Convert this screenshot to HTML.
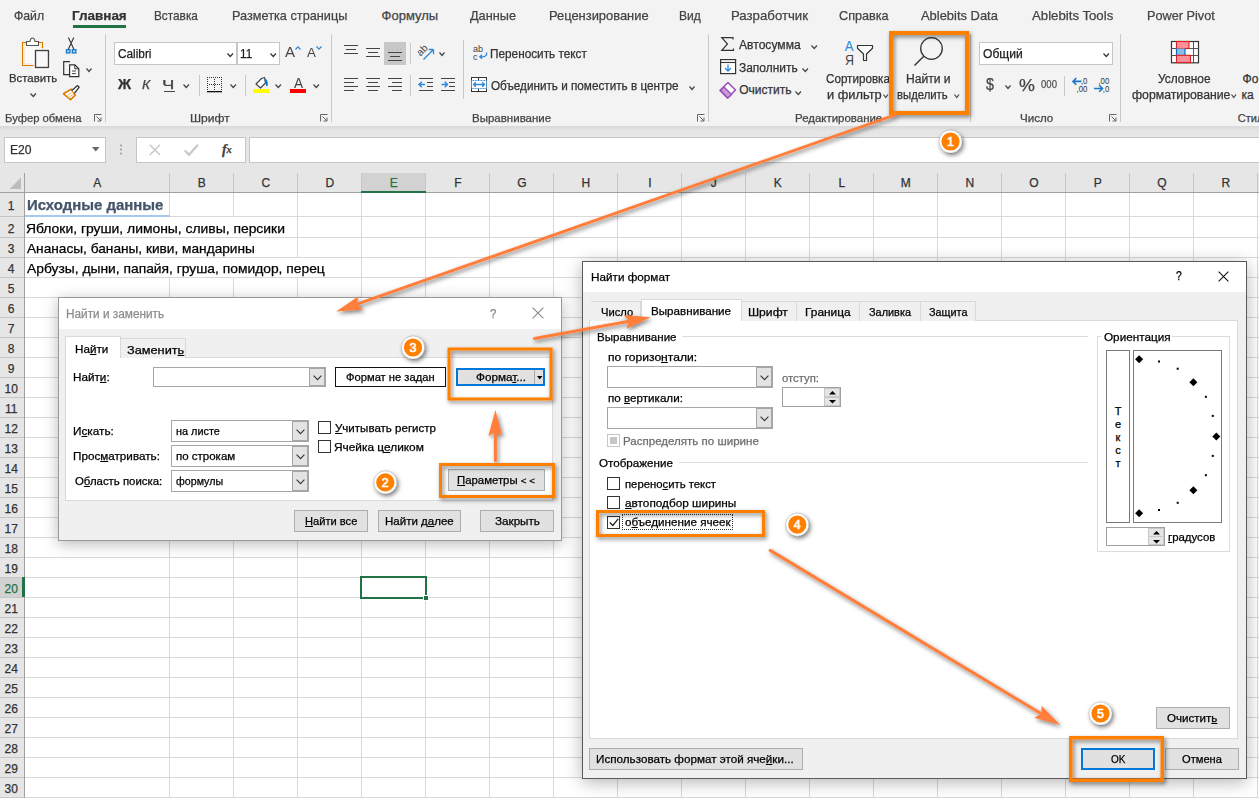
<!DOCTYPE html><html><head><meta charset="utf-8"><style>
html,body{margin:0;padding:0;}
body{width:1259px;height:798px;position:relative;overflow:hidden;background:#fff;font-family:"Liberation Sans",sans-serif;}
.t{position:absolute;white-space:nowrap;line-height:1;-webkit-text-stroke:0.25px currentColor;}
u{text-decoration:underline;text-underline-offset:1px;}
</style></head><body>
<div style="position:absolute;left:0px;top:0px;width:1259px;height:126px;background:#f3f3f3;"></div>
<div style="position:absolute;left:0px;top:126px;width:1259px;height:47px;background:#e6e6e6;"></div>
<div style="position:absolute;left:0px;top:126px;width:1259px;height:5px;background:linear-gradient(#d8d8d8,#e6e6e6);"></div>
<div class="t" style="left:13.66px;top:9.10px;font-size:13px;color:#444;transform:scaleX(0.942);transform-origin:0 0;">Файл</div>
<div class="t" style="left:153.89px;top:9.10px;font-size:13px;color:#444;transform:scaleX(0.908);transform-origin:0 0;">Вставка</div>
<div class="t" style="left:232.42px;top:9.10px;font-size:13px;color:#444;transform:scaleX(0.978);transform-origin:0 0;">Разметка страницы</div>
<div class="t" style="left:381.60px;top:9.10px;font-size:13px;color:#444;">Формулы</div>
<div class="t" style="left:469.80px;top:9.10px;font-size:13px;color:#444;transform:scaleX(0.979);transform-origin:0 0;">Данные</div>
<div class="t" style="left:548.61px;top:9.10px;font-size:13px;color:#444;transform:scaleX(0.992);transform-origin:0 0;">Рецензирование</div>
<div class="t" style="left:678.57px;top:9.10px;font-size:13px;color:#444;transform:scaleX(0.930);transform-origin:0 0;">Вид</div>
<div class="t" style="left:731.38px;top:9.10px;font-size:13px;color:#444;transform:scaleX(1.016);transform-origin:0 0;">Разработчик</div>
<div class="t" style="left:839.10px;top:9.10px;font-size:13px;color:#444;transform:scaleX(0.973);transform-origin:0 0;">Справка</div>
<div class="t" style="left:921.30px;top:9.10px;font-size:13px;color:#444;transform:scaleX(0.994);transform-origin:0 0;">Ablebits Data</div>
<div class="t" style="left:1032.30px;top:9.10px;font-size:13px;color:#444;transform:scaleX(1.016);transform-origin:0 0;">Ablebits Tools</div>
<div class="t" style="left:1146.52px;top:9.10px;font-size:13px;color:#444;transform:scaleX(0.978);transform-origin:0 0;">Power Pivot</div>
<div class="t" style="left:71.96px;top:9.10px;font-size:13px;color:#333;font-weight:700;transform:scaleX(1.035);transform-origin:0 0;">Главная</div>
<div style="position:absolute;left:73px;top:25px;width:53px;height:3px;background:#217346;"></div>
<div style="position:absolute;left:105px;top:34px;width:1px;height:88px;background:#c8c8c8;"></div>
<div style="position:absolute;left:331px;top:34px;width:1px;height:88px;background:#c8c8c8;"></div>
<div style="position:absolute;left:708px;top:34px;width:1px;height:88px;background:#c8c8c8;"></div>
<div style="position:absolute;left:970px;top:34px;width:1px;height:88px;background:#c8c8c8;"></div>
<div style="position:absolute;left:1120px;top:34px;width:1px;height:88px;background:#c8c8c8;"></div>
<svg style="position:absolute;left:18px;top:34px;overflow:visible;" width="34" height="36" viewBox="0 0 34 36"><rect x="4.5" y="8.5" width="20" height="23" fill="#fafafa" stroke="#e07b00" stroke-width="1.1"/><rect x="6" y="10" width="17" height="20" fill="none" stroke="#f7cf86" stroke-width="1" stroke-dasharray="1 1"/><path d="M8.5 11.5V7.5H12Q12.5 4 14.5 4Q16.5 4 17 7.5H20.5V11.5Z" fill="#fff" stroke="#555" stroke-width="1.1"/><rect x="15.5" y="14.5" width="17" height="21" fill="#fff"/><rect x="17.5" y="16.5" width="13" height="17" fill="#f8f8f8" stroke="#444" stroke-width="1.4"/></svg>
<div class="t" style="left:8.51px;top:73.07px;font-size:11.5px;color:#333;transform:scaleX(0.990);transform-origin:0 0;">Вставить</div>
<svg style="position:absolute;left:29.5px;top:92.5px;overflow:visible;" width="6.5" height="4" viewBox="0 0 6.5 4"><path d="M0.5 0.5L3.25 3.5L6.0 0.5" fill="none" stroke="#444" stroke-width="1.2"/></svg>
<svg style="position:absolute;left:64px;top:36px;overflow:visible;" width="14" height="18" viewBox="0 0 14 18"><path d="M4.4 1.5L10 13.4M9.8 1.5L4.2 13.4" stroke="#333" stroke-width="1.1" fill="none"/><rect x="2.4" y="13.6" width="3.6" height="3.4" fill="#9cc8ef" stroke="#1a78c8" stroke-width="1.2"/><rect x="8.3" y="13.6" width="3.6" height="3.4" fill="#9cc8ef" stroke="#1a78c8" stroke-width="1.2"/></svg>
<svg style="position:absolute;left:62px;top:60px;overflow:visible;" width="19" height="19" viewBox="0 0 19 19"><path d="M8 1.7H1.7V14.6H7" stroke="#333" stroke-width="1.2" fill="none"/><path d="M7.6 4.8H12.8L16.8 8.8V16.6H7.6Z" fill="#fff" stroke="#333" stroke-width="1.2"/><path d="M12.8 4.8V8.8H16.8" fill="none" stroke="#333" stroke-width="1"/><path d="M10 11H14M10 13.6H14" stroke="#444" stroke-width="1"/></svg>
<svg style="position:absolute;left:85.5px;top:68px;overflow:visible;" width="6" height="4" viewBox="0 0 6 4"><path d="M0.5 0.5L3.0 3.5L5.5 0.5" fill="none" stroke="#444" stroke-width="1.2"/></svg>
<svg style="position:absolute;left:62px;top:84px;overflow:visible;" width="18" height="17" viewBox="0 0 18 17"><path d="M1.5 9.8L9.2 5.2L13.2 11.2L8.6 15.6Z" fill="#fff" stroke="#e07b00" stroke-width="1.6" stroke-linejoin="round"/><path d="M4.5 11.5L10.5 8.5M6 13.8L11 10.5" stroke="#f3b36a" stroke-width="0.9"/><path d="M9.8 6.5L15.6 1.6L17.2 3.2L12.4 9.3" fill="#fff" stroke="#333" stroke-width="1.3" stroke-linejoin="round"/></svg>
<div class="t" style="left:4.68px;top:112.59px;font-size:11px;color:#444;transform:scaleX(1.023);transform-origin:0 0;">Буфер обмена</div>
<svg style="position:absolute;left:94px;top:114px;overflow:visible;" width="8" height="8" viewBox="0 0 8 8"><path d="M0.5 7.5V0.5H7.5" fill="none" stroke="#666" stroke-width="1"/><path d="M2.5 2.5L7 7M7 3.5V7H3.5" fill="none" stroke="#666" stroke-width="1"/></svg>
<div style="position:absolute;left:114px;top:42px;width:123px;height:23px;background:#fff;border:1px solid #c6c6c6;box-sizing:border-box;"></div>
<div style="position:absolute;left:237px;top:42px;width:43px;height:23px;background:#fff;border:1px solid #c6c6c6;box-sizing:border-box;"></div>
<div class="t" style="left:117.50px;top:48.14px;font-size:12px;color:#222;transform:scaleX(0.985);transform-origin:0 0;">Calibri</div>
<svg style="position:absolute;left:227px;top:53px;overflow:visible;" width="6.5" height="4" viewBox="0 0 6.5 4"><path d="M0.5 0.5L3.25 3.5L6.0 0.5" fill="none" stroke="#333" stroke-width="1.2"/></svg>
<div class="t" style="left:239.72px;top:48.14px;font-size:12px;color:#222;transform:scaleX(0.982);transform-origin:0 0;">11</div>
<svg style="position:absolute;left:270px;top:53px;overflow:visible;" width="6.5" height="4" viewBox="0 0 6.5 4"><path d="M0.5 0.5L3.25 3.5L6.0 0.5" fill="none" stroke="#333" stroke-width="1.2"/></svg>
<div class="t" style="left:284.70px;top:44.28px;font-size:15.5px;color:#444;-webkit-text-stroke:0;transform:scaleX(0.970);transform-origin:0 0;">A</div>
<svg style="position:absolute;left:295px;top:46px;overflow:visible;" width="6" height="4" viewBox="0 0 6 4"><path d="M0.5 3.5L3 0.8L5.5 3.5" fill="none" stroke="#2b88d8" stroke-width="1.2"/></svg>
<div class="t" style="left:307.40px;top:46.82px;font-size:12.5px;color:#444;-webkit-text-stroke:0;transform:scaleX(1.062);transform-origin:0 0;">A</div>
<svg style="position:absolute;left:316px;top:46px;overflow:visible;" width="6" height="4" viewBox="0 0 6 4"><path d="M0.5 0.5L3 3.2L5.5 0.5" fill="none" stroke="#2b88d8" stroke-width="1.2"/></svg>
<div class="t" style="left:118.00px;top:77.35px;font-size:14px;color:#333;font-weight:700;transform:scaleX(1.031);transform-origin:0 0;">Ж</div>
<div class="t" style="left:142.00px;top:78.20px;font-size:13px;color:#444;font-style:italic;transform:scaleX(1.062);transform-origin:0 0;">К</div>
<div class="t" style="left:162.37px;top:78.20px;font-size:13px;color:#444;transform:scaleX(1.429);transform-origin:0 0;">Ч</div>
<div style="position:absolute;left:164px;top:91px;width:11px;height:1px;background:#444;"></div>
<svg style="position:absolute;left:183px;top:83.8px;overflow:visible;" width="6.5" height="4" viewBox="0 0 6.5 4"><path d="M0.5 0.5L3.25 3.5L6.0 0.5" fill="none" stroke="#444" stroke-width="1.2"/></svg>
<div style="position:absolute;left:199px;top:75px;width:1px;height:21px;background:#c8c8c8;"></div>
<svg style="position:absolute;left:206px;top:76px;overflow:visible;" width="17" height="17" viewBox="0 0 17 17"><rect x="1" y="1" width="1" height="1" fill="#333"/><rect x="3" y="1" width="1" height="1" fill="#333"/><rect x="5" y="1" width="1" height="1" fill="#333"/><rect x="7" y="1" width="1" height="1" fill="#333"/><rect x="9" y="1" width="1" height="1" fill="#333"/><rect x="11" y="1" width="1" height="1" fill="#333"/><rect x="13" y="1" width="1" height="1" fill="#333"/><rect x="15" y="1" width="1" height="1" fill="#333"/><rect x="1" y="3" width="1" height="1" fill="#333"/><rect x="15" y="3" width="1" height="1" fill="#333"/><rect x="1" y="5" width="1" height="1" fill="#333"/><rect x="15" y="5" width="1" height="1" fill="#333"/><rect x="1" y="7" width="1" height="1" fill="#333"/><rect x="15" y="7" width="1" height="1" fill="#333"/><rect x="1" y="9" width="1" height="1" fill="#333"/><rect x="15" y="9" width="1" height="1" fill="#333"/><rect x="1" y="11" width="1" height="1" fill="#333"/><rect x="15" y="11" width="1" height="1" fill="#333"/><rect x="1" y="13" width="1" height="1" fill="#333"/><rect x="15" y="13" width="1" height="1" fill="#333"/><rect x="3" y="8" width="1" height="1" fill="#333"/><rect x="5" y="8" width="1" height="1" fill="#333"/><rect x="7" y="8" width="1" height="1" fill="#333"/><rect x="9" y="8" width="1" height="1" fill="#333"/><rect x="11" y="8" width="1" height="1" fill="#333"/><rect x="13" y="8" width="1" height="1" fill="#333"/><rect x="8" y="3" width="1" height="1" fill="#333"/><rect x="8" y="5" width="1" height="1" fill="#333"/><rect x="8" y="7" width="1" height="1" fill="#333"/><rect x="8" y="9" width="1" height="1" fill="#333"/><rect x="8" y="11" width="1" height="1" fill="#333"/><rect x="8" y="13" width="1" height="1" fill="#333"/><rect x="1" y="15" width="15" height="1.3" fill="#111"/></svg>
<svg style="position:absolute;left:229.5px;top:83.8px;overflow:visible;" width="6.5" height="4" viewBox="0 0 6.5 4"><path d="M0.5 0.5L3.25 3.5L6.0 0.5" fill="none" stroke="#444" stroke-width="1.2"/></svg>
<div style="position:absolute;left:245px;top:75px;width:1px;height:21px;background:#c8c8c8;"></div>
<svg style="position:absolute;left:252px;top:75px;overflow:visible;" width="19" height="19" viewBox="0 0 19 19"><path d="M4 9L9.5 3.5L12.5 2.5L13.5 8L8.5 13Z" fill="#fff" stroke="#444" stroke-width="1.2" stroke-linejoin="round"/><path d="M12.5 4.5Q15.5 5 14.8 11" fill="none" stroke="#1a78c8" stroke-width="1.8"/><rect x="1" y="14" width="16" height="4" fill="#ffff00"/></svg>
<svg style="position:absolute;left:275px;top:83.8px;overflow:visible;" width="6.5" height="4" viewBox="0 0 6.5 4"><path d="M0.5 0.5L3.25 3.5L6.0 0.5" fill="none" stroke="#444" stroke-width="1.2"/></svg>
<div class="t" style="left:293.90px;top:75.40px;font-size:15px;color:#444;-webkit-text-stroke:0;transform:scaleX(0.910);transform-origin:0 0;">A</div>
<div style="position:absolute;left:290px;top:89px;width:16px;height:4px;background:#ff0000;"></div>
<svg style="position:absolute;left:312.5px;top:83.8px;overflow:visible;" width="6.5" height="4" viewBox="0 0 6.5 4"><path d="M0.5 0.5L3.25 3.5L6.0 0.5" fill="none" stroke="#444" stroke-width="1.2"/></svg>
<div class="t" style="left:190.40px;top:112.59px;font-size:11px;color:#444;transform:scaleX(1.100);transform-origin:0 0;">Шрифт</div>
<svg style="position:absolute;left:320px;top:114px;overflow:visible;" width="8" height="8" viewBox="0 0 8 8"><path d="M0.5 7.5V0.5H7.5" fill="none" stroke="#666" stroke-width="1"/><path d="M2.5 2.5L7 7M7 3.5V7H3.5" fill="none" stroke="#666" stroke-width="1"/></svg>
<div style="position:absolute;left:384px;top:42px;width:22px;height:23px;background:#c8c8c8;"></div>
<div style="position:absolute;left:344px;top:45px;width:14px;height:1px;background:#444;"></div>
<div style="position:absolute;left:346px;top:49px;width:10px;height:1px;background:#444;"></div>
<div style="position:absolute;left:344px;top:53px;width:14px;height:1px;background:#444;"></div>
<div style="position:absolute;left:366px;top:48px;width:14px;height:1px;background:#444;"></div>
<div style="position:absolute;left:368px;top:52px;width:10px;height:1px;background:#444;"></div>
<div style="position:absolute;left:366px;top:56px;width:14px;height:1px;background:#444;"></div>
<div style="position:absolute;left:388px;top:52px;width:14px;height:1px;background:#444;"></div>
<div style="position:absolute;left:390px;top:56px;width:10px;height:1px;background:#444;"></div>
<div style="position:absolute;left:388px;top:60px;width:14px;height:1px;background:#444;"></div>
<div style="position:absolute;left:388px;top:49px;width:1px;height:1px;background:#b0b0b0;"></div>
<div style="position:absolute;left:392px;top:49px;width:1px;height:1px;background:#b0b0b0;"></div>
<div style="position:absolute;left:396px;top:49px;width:1px;height:1px;background:#b0b0b0;"></div>
<div style="position:absolute;left:400px;top:49px;width:1px;height:1px;background:#b0b0b0;"></div>
<div style="position:absolute;left:344px;top:78px;width:14px;height:1px;background:#444;"></div>
<div style="position:absolute;left:366px;top:78px;width:14px;height:1px;background:#444;"></div>
<div style="position:absolute;left:388px;top:78px;width:14px;height:1px;background:#444;"></div>
<div style="position:absolute;left:344px;top:86px;width:14px;height:1px;background:#444;"></div>
<div style="position:absolute;left:366px;top:86px;width:14px;height:1px;background:#444;"></div>
<div style="position:absolute;left:388px;top:86px;width:14px;height:1px;background:#444;"></div>
<div style="position:absolute;left:344px;top:82px;width:10px;height:1px;background:#444;"></div>
<div style="position:absolute;left:368px;top:82px;width:10px;height:1px;background:#444;"></div>
<div style="position:absolute;left:392px;top:82px;width:10px;height:1px;background:#444;"></div>
<div style="position:absolute;left:344px;top:90px;width:10px;height:1px;background:#444;"></div>
<div style="position:absolute;left:368px;top:90px;width:10px;height:1px;background:#444;"></div>
<div style="position:absolute;left:392px;top:90px;width:10px;height:1px;background:#444;"></div>
<div style="position:absolute;left:410px;top:43px;width:1px;height:21px;background:#c8c8c8;"></div>
<svg style="position:absolute;left:416px;top:43px;overflow:visible;" width="20" height="18" viewBox="0 0 20 18"><text x="0" y="0" font-size="10" font-family="Liberation Sans" fill="#444" transform="translate(4.5 13.5) rotate(-45)">ab</text><path d="M7.5 16.5L17.5 6.5M17.5 6.5H12.8M17.5 6.5V11.2" fill="none" stroke="#2b88d8" stroke-width="1.3"/></svg>
<svg style="position:absolute;left:438.5px;top:52px;overflow:visible;" width="6" height="4" viewBox="0 0 6 4"><path d="M0.5 0.5L3.0 3.5L5.5 0.5" fill="none" stroke="#444" stroke-width="1.2"/></svg>
<div style="position:absolute;left:410px;top:75px;width:1px;height:21px;background:#c8c8c8;"></div>
<div style="position:absolute;left:419px;top:78px;width:14px;height:1px;background:#444;"></div>
<div style="position:absolute;left:427px;top:82px;width:6px;height:1px;background:#444;"></div>
<div style="position:absolute;left:427px;top:86px;width:6px;height:1px;background:#444;"></div>
<div style="position:absolute;left:419px;top:90px;width:14px;height:1px;background:#444;"></div>
<svg style="position:absolute;left:418px;top:81px;overflow:visible;" width="8" height="7" viewBox="0 0 8 7"><path d="M7 3.5H1.2M3.8 0.8L1 3.5L3.8 6.2" fill="none" stroke="#2b88d8" stroke-width="1.4"/></svg>
<div style="position:absolute;left:441px;top:78px;width:14px;height:1px;background:#444;"></div>
<div style="position:absolute;left:449px;top:82px;width:6px;height:1px;background:#444;"></div>
<div style="position:absolute;left:449px;top:86px;width:6px;height:1px;background:#444;"></div>
<div style="position:absolute;left:441px;top:90px;width:14px;height:1px;background:#444;"></div>
<svg style="position:absolute;left:441px;top:81px;overflow:visible;" width="8" height="7" viewBox="0 0 8 7"><path d="M0.5 3.5H6.3M3.7 0.8L6.5 3.5L3.7 6.2" fill="none" stroke="#2b88d8" stroke-width="1.4"/></svg>
<div style="position:absolute;left:463px;top:40px;width:1px;height:59px;background:#c8c8c8;"></div>
<svg style="position:absolute;left:472px;top:43px;overflow:visible;" width="16" height="18" viewBox="0 0 16 18"><text x="1" y="9" font-size="9" font-family="Liberation Sans" fill="#444">ab</text><text x="1" y="16.5" font-size="9" font-family="Liberation Sans" fill="#444">c</text><path d="M14.5 9.5Q15.5 13 11 13.8H8M10 11.8L7.8 13.8L10 15.8" fill="none" stroke="#2b88d8" stroke-width="1.3"/></svg>
<div class="t" style="left:489.52px;top:48.04px;font-size:12px;color:#333;transform:scaleX(0.982);transform-origin:0 0;">Переносить текст</div>
<svg style="position:absolute;left:471px;top:77px;overflow:visible;" width="16" height="15" viewBox="0 0 16 15"><rect x="0.5" y="0.5" width="15" height="14" fill="#fff" stroke="#333" stroke-width="1"/><path d="M7.5 0.5V3.5M7.5 11.5V14.5" stroke="#333" stroke-width="1"/><rect x="0.5" y="3.5" width="15" height="8" fill="#fff" stroke="#2b88d8" stroke-width="1" stroke-dasharray="1 0.6"/><path d="M2.5 7.5H13.5M4.8 5.2L2.5 7.5L4.8 9.8M11.2 5.2L13.5 7.5L11.2 9.8" fill="none" stroke="#2b88d8" stroke-width="1.3"/></svg>
<div class="t" style="left:490.50px;top:79.84px;font-size:12px;color:#333;transform:scaleX(0.977);transform-origin:0 0;">Объединить и поместить в центре</div>
<svg style="position:absolute;left:688.5px;top:85.5px;overflow:visible;" width="6" height="4" viewBox="0 0 6 4"><path d="M0.5 0.5L3.0 3.5L5.5 0.5" fill="none" stroke="#444" stroke-width="1.2"/></svg>
<div class="t" style="left:471.55px;top:112.59px;font-size:11px;color:#444;transform:scaleX(1.046);transform-origin:0 0;">Выравнивание</div>
<svg style="position:absolute;left:697px;top:114px;overflow:visible;" width="8" height="8" viewBox="0 0 8 8"><path d="M0.5 7.5V0.5H7.5" fill="none" stroke="#666" stroke-width="1"/><path d="M2.5 2.5L7 7M7 3.5V7H3.5" fill="none" stroke="#666" stroke-width="1"/></svg>
<svg style="position:absolute;left:721px;top:37px;overflow:visible;" width="13" height="14" viewBox="0 0 13 14"><path d="M12 2.5V0.6H0.8L6.5 7L0.8 13.4H12.5V11.5" fill="none" stroke="#333" stroke-width="1.2"/></svg>
<div class="t" style="left:739.20px;top:39.44px;font-size:12px;color:#333;transform:scaleX(1.008);transform-origin:0 0;">Автосумма</div>
<svg style="position:absolute;left:811px;top:45px;overflow:visible;" width="6.5" height="4" viewBox="0 0 6.5 4"><path d="M0.5 0.5L3.25 3.5L6.0 0.5" fill="none" stroke="#444" stroke-width="1.2"/></svg>
<svg style="position:absolute;left:720px;top:59px;overflow:visible;" width="17" height="16" viewBox="0 0 17 16"><rect x="0.6" y="0.6" width="15" height="14" fill="#fff" stroke="#333" stroke-width="1.2"/><path d="M0.6 3.5H15.6" stroke="#333" stroke-width="1.1"/><path d="M8 5.5V12M5 9L8 12L11 9" fill="none" stroke="#2b88d8" stroke-width="1.3"/></svg>
<div class="t" style="left:739.20px;top:62.04px;font-size:12px;color:#333;transform:scaleX(0.995);transform-origin:0 0;">Заполнить</div>
<svg style="position:absolute;left:801.5px;top:68px;overflow:visible;" width="6.5" height="4" viewBox="0 0 6.5 4"><path d="M0.5 0.5L3.25 3.5L6.0 0.5" fill="none" stroke="#444" stroke-width="1.2"/></svg>
<svg style="position:absolute;left:719px;top:81px;overflow:visible;" width="18" height="18" viewBox="0 0 18 18"><path d="M1 9.5L9 1.5L16.5 9L8.5 17Z" fill="#fff" stroke="#9b4fb8" stroke-width="1.6" stroke-linejoin="round"/><path d="M1.5 9.5L5 6L12.5 13.5L8.8 17Z" fill="#c89ad8" stroke="#9b4fb8" stroke-width="1.4"/></svg>
<div class="t" style="left:739.20px;top:84.34px;font-size:12px;color:#333;">Очистить</div>
<svg style="position:absolute;left:794.5px;top:90.5px;overflow:visible;" width="6.5" height="4" viewBox="0 0 6.5 4"><path d="M0.5 0.5L3.25 3.5L6.0 0.5" fill="none" stroke="#444" stroke-width="1.2"/></svg>
<svg style="position:absolute;left:844px;top:39px;overflow:visible;" width="32" height="27" viewBox="0 0 32 27"><text x="0.8" y="12" font-size="15.5" font-family="Liberation Sans" fill="#2b88d8" transform="scale(0.85 1)">A</text><text x="1.2" y="26" font-size="15.5" font-family="Liberation Sans" fill="#444" transform="scale(0.8 1)">Я</text><path d="M13.5 6.5H28.5V9.3L22.5 15V21.5H19.5V15L13.5 9.3Z" fill="#fafafa" stroke="#333" stroke-width="1.2" stroke-linejoin="round"/></svg>
<div class="t" style="left:826.40px;top:72.74px;font-size:12px;color:#333;transform:scaleX(0.970);transform-origin:0 0;">Сортировка</div>
<div class="t" style="left:827.43px;top:88.74px;font-size:12px;color:#333;transform:scaleX(1.070);transform-origin:0 0;">и фильтр</div>
<svg style="position:absolute;left:883px;top:94px;overflow:visible;" width="5.5" height="4" viewBox="0 0 5.5 4"><path d="M0.5 0.5L2.75 3.5L5.0 0.5" fill="none" stroke="#444" stroke-width="1.2"/></svg>
<svg style="position:absolute;left:912px;top:36px;overflow:visible;" width="32" height="31" viewBox="0 0 32 31"><circle cx="19.5" cy="12.5" r="10.8" fill="none" stroke="#333" stroke-width="1.3"/><path d="M11.8 20.2L2.5 29.5" stroke="#333" stroke-width="1.4"/></svg>
<div class="t" style="left:906.49px;top:72.74px;font-size:12px;color:#333;transform:scaleX(1.007);transform-origin:0 0;">Найти и</div>
<div class="t" style="left:897.06px;top:88.74px;font-size:12px;color:#333;transform:scaleX(0.943);transform-origin:0 0;">выделить</div>
<svg style="position:absolute;left:953.5px;top:94px;overflow:visible;" width="5.5" height="4" viewBox="0 0 5.5 4"><path d="M0.5 0.5L2.75 3.5L5.0 0.5" fill="none" stroke="#444" stroke-width="1.2"/></svg>
<div class="t" style="left:794.56px;top:112.59px;font-size:11px;color:#444;transform:scaleX(1.041);transform-origin:0 0;">Редактирование</div>
<div style="position:absolute;left:979px;top:42px;width:134px;height:23px;background:#fff;border:1px solid #c6c6c6;box-sizing:border-box;"></div>
<div class="t" style="left:982.80px;top:47.64px;font-size:12px;color:#222;transform:scaleX(1.005);transform-origin:0 0;">Общий</div>
<svg style="position:absolute;left:1103px;top:53px;overflow:visible;" width="6.5" height="4" viewBox="0 0 6.5 4"><path d="M0.5 0.5L3.25 3.5L6.0 0.5" fill="none" stroke="#333" stroke-width="1.2"/></svg>
<div class="t" style="left:985.50px;top:77.46px;font-size:16px;color:#444;transform:scaleX(0.889);transform-origin:0 0;">$</div>
<svg style="position:absolute;left:1004.5px;top:84.5px;overflow:visible;" width="6" height="4" viewBox="0 0 6 4"><path d="M0.5 0.5L3.0 3.5L5.5 0.5" fill="none" stroke="#444" stroke-width="1.2"/></svg>
<div class="t" style="left:1019.00px;top:76.61px;font-size:17px;color:#444;transform:scaleX(1.053);transform-origin:0 0;">%</div>
<div class="t" style="left:1040.70px;top:79.53px;font-size:10px;color:#555;transform:scaleX(0.959);transform-origin:0 0;">000</div>
<div style="position:absolute;left:1064px;top:76px;width:1px;height:20px;background:#c8c8c8;"></div>
<svg style="position:absolute;left:1068px;top:72px;overflow:visible;" width="46" height="26" viewBox="0 0 46 26"><g transform="translate(19.4 0) scale(0.85 1)"><text x="0" y="11.6" text-anchor="end" font-size="9.2" font-family="Liberation Sans" fill="#333">,0</text></g><g transform="translate(19.4 0) scale(0.85 1)"><text x="0" y="19.6" text-anchor="end" font-size="9.2" font-family="Liberation Sans" fill="#333">,00</text></g><path d="M13.5 9.4H5M8.3 6.1L5 9.4L8.3 12.7" fill="none" stroke="#1a78c8" stroke-width="1.6"/><g transform="translate(41.3 0) scale(0.85 1)"><text x="0" y="11.6" text-anchor="end" font-size="9.2" font-family="Liberation Sans" fill="#333">,00</text></g><g transform="translate(41.3 0) scale(0.85 1)"><text x="0" y="19.6" text-anchor="end" font-size="9.2" font-family="Liberation Sans" fill="#333">,0</text></g><path d="M26 16.5H34.5M31.2 13.2L34.5 16.5L31.2 19.8" fill="none" stroke="#1a78c8" stroke-width="1.6"/></svg>
<div class="t" style="left:1019.95px;top:112.59px;font-size:11px;color:#444;transform:scaleX(1.053);transform-origin:0 0;">Число</div>
<svg style="position:absolute;left:1109px;top:114px;overflow:visible;" width="8" height="8" viewBox="0 0 8 8"><path d="M0.5 7.5V0.5H7.5" fill="none" stroke="#666" stroke-width="1"/><path d="M2.5 2.5L7 7M7 3.5V7H3.5" fill="none" stroke="#666" stroke-width="1"/></svg>
<svg style="position:absolute;left:1170px;top:40px;overflow:visible;" width="30" height="24" viewBox="0 0 30 24"><rect x="1.5" y="1.5" width="27" height="21.3" fill="#fff" stroke="#333" stroke-width="1.2"/><path d="M1.5 8.5H28.5M1.5 15.5H28.5M23.5 1.5V22.8" stroke="#555" stroke-width="1"/><rect x="6.5" y="1.5" width="12.5" height="7" fill="#ff9098" stroke="#e0201e" stroke-width="1.1"/><rect x="6.5" y="8.5" width="8.5" height="7" fill="#86bde9"/><path d="M6.5 8.5V15.5M15 8.5V15.5" stroke="#0a6fc2" stroke-width="1.2"/><rect x="6.5" y="15.3" width="14" height="7.3" fill="#ff9098" stroke="#e0201e" stroke-width="1.1"/></svg>
<div class="t" style="left:1158.00px;top:72.74px;font-size:12px;color:#333;transform:scaleX(0.991);transform-origin:0 0;">Условное</div>
<div class="t" style="left:1131.50px;top:88.74px;font-size:12px;color:#333;transform:scaleX(1.021);transform-origin:0 0;">форматирование</div>
<svg style="position:absolute;left:1230.5px;top:94px;overflow:visible;" width="5.5" height="4" viewBox="0 0 5.5 4"><path d="M0.5 0.5L2.75 3.5L5.0 0.5" fill="none" stroke="#444" stroke-width="1.2"/></svg>
<div class="t" style="left:1242.60px;top:72.74px;font-size:12px;color:#333;">Фо</div>
<div class="t" style="left:1241.60px;top:88.74px;font-size:12px;color:#333;">ка</div>
<div class="t" style="left:1237.80px;top:112.59px;font-size:11px;color:#444;">Стил</div>
<div style="position:absolute;left:4px;top:137px;width:102px;height:26px;background:#fff;border:1px solid #c6c6c6;box-sizing:border-box;"></div>
<div class="t" style="left:10.49px;top:144.44px;font-size:12px;color:#333;transform:scaleX(1.010);transform-origin:0 0;">E20</div>
<svg style="position:absolute;left:92px;top:147px;overflow:visible;" width="8" height="5" viewBox="0 0 8 5"><path d="M0 0H7.5L3.75 4.5Z" fill="#666"/></svg>
<svg style="position:absolute;left:119px;top:144px;overflow:visible;" width="4" height="12" viewBox="0 0 4 12"><circle cx="2" cy="1.5" r="1" fill="#999"/><circle cx="2" cy="5.5" r="1" fill="#999"/><circle cx="2" cy="9.5" r="1" fill="#999"/></svg>
<div style="position:absolute;left:136px;top:137px;width:110px;height:26px;background:#fff;border:1px solid #c6c6c6;box-sizing:border-box;"></div>
<svg style="position:absolute;left:149px;top:144px;overflow:visible;" width="12" height="12" viewBox="0 0 12 12"><path d="M0.8 0.8L11 11M11 0.8L0.8 11" stroke="#c8c8c8" stroke-width="1.5"/></svg>
<svg style="position:absolute;left:184px;top:144px;overflow:visible;" width="15" height="12" viewBox="0 0 15 12"><path d="M0.8 6.5L5 10.8L14 0.8" fill="none" stroke="#c8c8c8" stroke-width="2.2"/></svg>
<div class="t" style="left:222.00px;top:142.65px;font-size:14px;color:#444;font-style:italic;font-family:'Liberation Serif',serif;font-weight:700;">f</div>
<div class="t" style="left:226.50px;top:145.11px;font-size:10.5px;color:#444;font-style:italic;font-family:'Liberation Serif',serif;font-weight:700;">x</div>
<div style="position:absolute;left:249px;top:137px;width:1010px;height:26px;background:#fff;border:1px solid #c6c6c6;border-right:none;box-sizing:border-box;"></div>
<div style="position:absolute;left:0px;top:173px;width:1259px;height:19px;background:#e6e6e6;"></div>
<div style="position:absolute;left:0px;top:192px;width:24px;height:606px;background:#e6e6e6;"></div>
<div style="position:absolute;left:361px;top:173px;width:64px;height:19px;background:#d2d2d2;"></div>
<div style="position:absolute;left:0px;top:577px;width:24px;height:20px;background:#d2d2d2;"></div>
<div style="position:absolute;left:169px;top:173px;width:1px;height:19px;background:#c6c6c6;"></div>
<div style="position:absolute;left:233px;top:173px;width:1px;height:19px;background:#c6c6c6;"></div>
<div style="position:absolute;left:297px;top:173px;width:1px;height:19px;background:#c6c6c6;"></div>
<div style="position:absolute;left:361px;top:173px;width:1px;height:19px;background:#c6c6c6;"></div>
<div style="position:absolute;left:425px;top:173px;width:1px;height:19px;background:#c6c6c6;"></div>
<div style="position:absolute;left:489px;top:173px;width:1px;height:19px;background:#c6c6c6;"></div>
<div style="position:absolute;left:553px;top:173px;width:1px;height:19px;background:#c6c6c6;"></div>
<div style="position:absolute;left:617px;top:173px;width:1px;height:19px;background:#c6c6c6;"></div>
<div style="position:absolute;left:681px;top:173px;width:1px;height:19px;background:#c6c6c6;"></div>
<div style="position:absolute;left:745px;top:173px;width:1px;height:19px;background:#c6c6c6;"></div>
<div style="position:absolute;left:809px;top:173px;width:1px;height:19px;background:#c6c6c6;"></div>
<div style="position:absolute;left:873px;top:173px;width:1px;height:19px;background:#c6c6c6;"></div>
<div style="position:absolute;left:937px;top:173px;width:1px;height:19px;background:#c6c6c6;"></div>
<div style="position:absolute;left:1001px;top:173px;width:1px;height:19px;background:#c6c6c6;"></div>
<div style="position:absolute;left:1065px;top:173px;width:1px;height:19px;background:#c6c6c6;"></div>
<div style="position:absolute;left:1129px;top:173px;width:1px;height:19px;background:#c6c6c6;"></div>
<div style="position:absolute;left:1193px;top:173px;width:1px;height:19px;background:#c6c6c6;"></div>
<div style="position:absolute;left:1257px;top:173px;width:1px;height:19px;background:#c6c6c6;"></div>
<div style="position:absolute;left:0px;top:216px;width:24px;height:1px;background:#c6c6c6;"></div>
<div style="position:absolute;left:0px;top:237px;width:24px;height:1px;background:#c6c6c6;"></div>
<div style="position:absolute;left:0px;top:257px;width:24px;height:1px;background:#c6c6c6;"></div>
<div style="position:absolute;left:0px;top:277px;width:24px;height:1px;background:#c6c6c6;"></div>
<div style="position:absolute;left:0px;top:297px;width:24px;height:1px;background:#c6c6c6;"></div>
<div style="position:absolute;left:0px;top:317px;width:24px;height:1px;background:#c6c6c6;"></div>
<div style="position:absolute;left:0px;top:337px;width:24px;height:1px;background:#c6c6c6;"></div>
<div style="position:absolute;left:0px;top:357px;width:24px;height:1px;background:#c6c6c6;"></div>
<div style="position:absolute;left:0px;top:377px;width:24px;height:1px;background:#c6c6c6;"></div>
<div style="position:absolute;left:0px;top:397px;width:24px;height:1px;background:#c6c6c6;"></div>
<div style="position:absolute;left:0px;top:417px;width:24px;height:1px;background:#c6c6c6;"></div>
<div style="position:absolute;left:0px;top:437px;width:24px;height:1px;background:#c6c6c6;"></div>
<div style="position:absolute;left:0px;top:457px;width:24px;height:1px;background:#c6c6c6;"></div>
<div style="position:absolute;left:0px;top:477px;width:24px;height:1px;background:#c6c6c6;"></div>
<div style="position:absolute;left:0px;top:497px;width:24px;height:1px;background:#c6c6c6;"></div>
<div style="position:absolute;left:0px;top:517px;width:24px;height:1px;background:#c6c6c6;"></div>
<div style="position:absolute;left:0px;top:537px;width:24px;height:1px;background:#c6c6c6;"></div>
<div style="position:absolute;left:0px;top:557px;width:24px;height:1px;background:#c6c6c6;"></div>
<div style="position:absolute;left:0px;top:577px;width:24px;height:1px;background:#c6c6c6;"></div>
<div style="position:absolute;left:0px;top:597px;width:24px;height:1px;background:#c6c6c6;"></div>
<div style="position:absolute;left:0px;top:617px;width:24px;height:1px;background:#c6c6c6;"></div>
<div style="position:absolute;left:0px;top:637px;width:24px;height:1px;background:#c6c6c6;"></div>
<div style="position:absolute;left:0px;top:657px;width:24px;height:1px;background:#c6c6c6;"></div>
<div style="position:absolute;left:0px;top:677px;width:24px;height:1px;background:#c6c6c6;"></div>
<div style="position:absolute;left:0px;top:697px;width:24px;height:1px;background:#c6c6c6;"></div>
<div style="position:absolute;left:0px;top:717px;width:24px;height:1px;background:#c6c6c6;"></div>
<div style="position:absolute;left:0px;top:737px;width:24px;height:1px;background:#c6c6c6;"></div>
<div style="position:absolute;left:0px;top:757px;width:24px;height:1px;background:#c6c6c6;"></div>
<div style="position:absolute;left:0px;top:777px;width:24px;height:1px;background:#c6c6c6;"></div>
<div style="position:absolute;left:0px;top:797px;width:24px;height:1px;background:#c6c6c6;"></div>
<div style="position:absolute;left:0px;top:192px;width:1259px;height:1px;background:#a0a0a0;"></div>
<div style="position:absolute;left:24px;top:173px;width:1px;height:625px;background:#a0a0a0;"></div>
<div style="position:absolute;left:169px;top:193px;width:1px;height:24px;background:#d9d9d9"></div><div style="position:absolute;left:169px;top:277px;width:1px;height:521px;background:#d9d9d9"></div><div style="position:absolute;left:233px;top:193px;width:1px;height:24px;background:#d9d9d9"></div><div style="position:absolute;left:233px;top:277px;width:1px;height:521px;background:#d9d9d9"></div><div style="position:absolute;left:297px;top:193px;width:1px;height:64px;background:#d9d9d9"></div><div style="position:absolute;left:297px;top:277px;width:1px;height:521px;background:#d9d9d9"></div><div style="position:absolute;left:361px;top:193px;width:1px;height:605px;background:#d9d9d9"></div><div style="position:absolute;left:425px;top:193px;width:1px;height:605px;background:#d9d9d9"></div><div style="position:absolute;left:489px;top:193px;width:1px;height:605px;background:#d9d9d9"></div><div style="position:absolute;left:553px;top:193px;width:1px;height:605px;background:#d9d9d9"></div><div style="position:absolute;left:617px;top:193px;width:1px;height:605px;background:#d9d9d9"></div><div style="position:absolute;left:681px;top:193px;width:1px;height:605px;background:#d9d9d9"></div><div style="position:absolute;left:745px;top:193px;width:1px;height:605px;background:#d9d9d9"></div><div style="position:absolute;left:809px;top:193px;width:1px;height:605px;background:#d9d9d9"></div><div style="position:absolute;left:873px;top:193px;width:1px;height:605px;background:#d9d9d9"></div><div style="position:absolute;left:937px;top:193px;width:1px;height:605px;background:#d9d9d9"></div><div style="position:absolute;left:1001px;top:193px;width:1px;height:605px;background:#d9d9d9"></div><div style="position:absolute;left:1065px;top:193px;width:1px;height:605px;background:#d9d9d9"></div><div style="position:absolute;left:1129px;top:193px;width:1px;height:605px;background:#d9d9d9"></div><div style="position:absolute;left:1193px;top:193px;width:1px;height:605px;background:#d9d9d9"></div><div style="position:absolute;left:1257px;top:193px;width:1px;height:605px;background:#d9d9d9"></div><div style="position:absolute;left:25px;top:216px;width:1234px;height:1px;background:#d9d9d9"></div><div style="position:absolute;left:25px;top:237px;width:1234px;height:1px;background:#d9d9d9"></div><div style="position:absolute;left:25px;top:257px;width:1234px;height:1px;background:#d9d9d9"></div><div style="position:absolute;left:25px;top:277px;width:1234px;height:1px;background:#d9d9d9"></div><div style="position:absolute;left:25px;top:297px;width:1234px;height:1px;background:#d9d9d9"></div><div style="position:absolute;left:25px;top:317px;width:1234px;height:1px;background:#d9d9d9"></div><div style="position:absolute;left:25px;top:337px;width:1234px;height:1px;background:#d9d9d9"></div><div style="position:absolute;left:25px;top:357px;width:1234px;height:1px;background:#d9d9d9"></div><div style="position:absolute;left:25px;top:377px;width:1234px;height:1px;background:#d9d9d9"></div><div style="position:absolute;left:25px;top:397px;width:1234px;height:1px;background:#d9d9d9"></div><div style="position:absolute;left:25px;top:417px;width:1234px;height:1px;background:#d9d9d9"></div><div style="position:absolute;left:25px;top:437px;width:1234px;height:1px;background:#d9d9d9"></div><div style="position:absolute;left:25px;top:457px;width:1234px;height:1px;background:#d9d9d9"></div><div style="position:absolute;left:25px;top:477px;width:1234px;height:1px;background:#d9d9d9"></div><div style="position:absolute;left:25px;top:497px;width:1234px;height:1px;background:#d9d9d9"></div><div style="position:absolute;left:25px;top:517px;width:1234px;height:1px;background:#d9d9d9"></div><div style="position:absolute;left:25px;top:537px;width:1234px;height:1px;background:#d9d9d9"></div><div style="position:absolute;left:25px;top:557px;width:1234px;height:1px;background:#d9d9d9"></div><div style="position:absolute;left:25px;top:577px;width:1234px;height:1px;background:#d9d9d9"></div><div style="position:absolute;left:25px;top:597px;width:1234px;height:1px;background:#d9d9d9"></div><div style="position:absolute;left:25px;top:617px;width:1234px;height:1px;background:#d9d9d9"></div><div style="position:absolute;left:25px;top:637px;width:1234px;height:1px;background:#d9d9d9"></div><div style="position:absolute;left:25px;top:657px;width:1234px;height:1px;background:#d9d9d9"></div><div style="position:absolute;left:25px;top:677px;width:1234px;height:1px;background:#d9d9d9"></div><div style="position:absolute;left:25px;top:697px;width:1234px;height:1px;background:#d9d9d9"></div><div style="position:absolute;left:25px;top:717px;width:1234px;height:1px;background:#d9d9d9"></div><div style="position:absolute;left:25px;top:737px;width:1234px;height:1px;background:#d9d9d9"></div><div style="position:absolute;left:25px;top:757px;width:1234px;height:1px;background:#d9d9d9"></div><div style="position:absolute;left:25px;top:777px;width:1234px;height:1px;background:#d9d9d9"></div><div style="position:absolute;left:25px;top:797px;width:1234px;height:1px;background:#d9d9d9"></div>
<div style="position:absolute;left:361px;top:191px;width:65px;height:2px;background:#217346;"></div>
<div style="position:absolute;left:22px;top:577px;width:3px;height:20px;background:#217346;"></div>
<svg style="position:absolute;left:9px;top:177px;overflow:visible;" width="13" height="13" viewBox="0 0 13 13"><path d="M12 0.5V12H0.5Z" fill="#bcbcbc"/></svg>
<div class="t" style="left:93.29px;top:177.04px;font-size:12px;color:#333;">A</div>
<div class="t" style="left:197.79px;top:177.04px;font-size:12px;color:#333;">B</div>
<div class="t" style="left:261.46px;top:177.04px;font-size:12px;color:#333;">C</div>
<div class="t" style="left:325.46px;top:177.04px;font-size:12px;color:#333;">D</div>
<div class="t" style="left:389.79px;top:177.04px;font-size:12px;color:#217346;">E</div>
<div class="t" style="left:454.13px;top:177.04px;font-size:12px;color:#333;">F</div>
<div class="t" style="left:517.13px;top:177.04px;font-size:12px;color:#333;">G</div>
<div class="t" style="left:581.46px;top:177.04px;font-size:12px;color:#333;">H</div>
<div class="t" style="left:648.13px;top:177.04px;font-size:12px;color:#333;">I</div>
<div class="t" style="left:710.80px;top:177.04px;font-size:12px;color:#333;">J</div>
<div class="t" style="left:773.79px;top:177.04px;font-size:12px;color:#333;">K</div>
<div class="t" style="left:838.46px;top:177.04px;font-size:12px;color:#333;">L</div>
<div class="t" style="left:900.80px;top:177.04px;font-size:12px;color:#333;">M</div>
<div class="t" style="left:965.46px;top:177.04px;font-size:12px;color:#333;">N</div>
<div class="t" style="left:1029.13px;top:177.04px;font-size:12px;color:#333;">O</div>
<div class="t" style="left:1093.79px;top:177.04px;font-size:12px;color:#333;">P</div>
<div class="t" style="left:1157.13px;top:177.04px;font-size:12px;color:#333;">Q</div>
<div class="t" style="left:1221.46px;top:177.04px;font-size:12px;color:#333;">R</div>
<div class="t" style="left:7.86px;top:200.04px;font-size:12px;color:#333;">1</div>
<div class="t" style="left:7.86px;top:222.54px;font-size:12px;color:#333;">2</div>
<div class="t" style="left:7.86px;top:243.04px;font-size:12px;color:#333;">3</div>
<div class="t" style="left:7.86px;top:263.04px;font-size:12px;color:#333;">4</div>
<div class="t" style="left:7.86px;top:283.04px;font-size:12px;color:#333;">5</div>
<div class="t" style="left:7.86px;top:303.04px;font-size:12px;color:#333;">6</div>
<div class="t" style="left:7.86px;top:323.04px;font-size:12px;color:#333;">7</div>
<div class="t" style="left:7.86px;top:343.04px;font-size:12px;color:#333;">8</div>
<div class="t" style="left:7.86px;top:363.04px;font-size:12px;color:#333;">9</div>
<div class="t" style="left:4.52px;top:383.04px;font-size:12px;color:#333;">10</div>
<div class="t" style="left:4.97px;top:403.04px;font-size:12px;color:#333;">11</div>
<div class="t" style="left:4.52px;top:423.04px;font-size:12px;color:#333;">12</div>
<div class="t" style="left:4.52px;top:443.04px;font-size:12px;color:#333;">13</div>
<div class="t" style="left:4.52px;top:463.04px;font-size:12px;color:#333;">14</div>
<div class="t" style="left:4.52px;top:483.04px;font-size:12px;color:#333;">15</div>
<div class="t" style="left:4.52px;top:503.04px;font-size:12px;color:#333;">16</div>
<div class="t" style="left:4.52px;top:523.04px;font-size:12px;color:#333;">17</div>
<div class="t" style="left:4.52px;top:543.04px;font-size:12px;color:#333;">18</div>
<div class="t" style="left:4.52px;top:563.04px;font-size:12px;color:#333;">19</div>
<div class="t" style="left:4.52px;top:583.04px;font-size:12px;color:#217346;">20</div>
<div class="t" style="left:4.52px;top:603.04px;font-size:12px;color:#333;">21</div>
<div class="t" style="left:4.52px;top:623.04px;font-size:12px;color:#333;">22</div>
<div class="t" style="left:4.52px;top:643.04px;font-size:12px;color:#333;">23</div>
<div class="t" style="left:4.52px;top:663.04px;font-size:12px;color:#333;">24</div>
<div class="t" style="left:4.52px;top:683.04px;font-size:12px;color:#333;">25</div>
<div class="t" style="left:4.52px;top:703.04px;font-size:12px;color:#333;">26</div>
<div class="t" style="left:4.52px;top:723.04px;font-size:12px;color:#333;">27</div>
<div class="t" style="left:4.52px;top:743.04px;font-size:12px;color:#333;">28</div>
<div class="t" style="left:4.52px;top:763.04px;font-size:12px;color:#333;">29</div>
<div class="t" style="left:4.52px;top:783.04px;font-size:12px;color:#333;">30</div>
<div class="t" style="left:27.03px;top:197.95px;font-size:14px;color:#44546a;font-weight:700;transform:scaleX(1.067);transform-origin:0 0;">Исходные данные</div>
<div style="position:absolute;left:25px;top:215px;width:145px;height:2px;background:#a6c8ea;"></div>
<div class="t" style="left:26.03px;top:221.70px;font-size:13px;color:#000;transform:scaleX(1.068);transform-origin:0 0;">Яблоки, груши, лимоны, сливы, персики</div>
<div class="t" style="left:27.10px;top:241.70px;font-size:13px;color:#000;transform:scaleX(1.052);transform-origin:0 0;">Ананасы, бананы, киви, мандарины</div>
<div class="t" style="left:27.10px;top:261.70px;font-size:13px;color:#000;transform:scaleX(1.064);transform-origin:0 0;">Арбузы, дыни, папайя, груша, помидор, перец</div>
<div style="position:absolute;left:360px;top:576px;width:67px;height:23px;border:2px solid #217346;box-sizing:border-box;"></div>
<div style="position:absolute;left:423px;top:595px;width:6px;height:6px;background:#217346;border:1px solid #fff;box-sizing:border-box;"></div>
<div style="position:absolute;left:58px;top:297px;width:504px;height:244px;background:#fff;border:1px solid #999;box-sizing:border-box;box-shadow:0 3px 14px rgba(0,0,0,0.28);"></div>
<div style="position:absolute;left:59px;top:329px;width:502px;height:211px;background:#f0f0f0;"></div>
<div class="t" style="left:66.36px;top:308.42px;font-size:12.5px;color:#8c8c8c;transform:scaleX(0.944);transform-origin:0 0;">Найти и заменить</div>
<div class="t" style="left:490.00px;top:307.00px;font-size:13px;color:#888;transform:scaleX(0.886);transform-origin:0 0;">?</div>
<svg style="position:absolute;left:532px;top:307px;overflow:visible;" width="12" height="12" viewBox="0 0 12 12"><path d="M0.6 0.6L11.4 11.4M11.4 0.6L0.6 11.4" stroke="#888" stroke-width="1.1"/></svg>
<div style="position:absolute;left:65px;top:357px;width:488px;height:144px;background:#fff;border:1px solid #d9d9d9;box-sizing:border-box;"></div>
<div style="position:absolute;left:120px;top:338px;width:66px;height:20px;background:#f0f0f0;border:1px solid #d9d9d9;border-bottom:none;box-sizing:border-box;"></div>
<div style="position:absolute;left:65px;top:336px;width:56px;height:22px;background:#fff;border:1px solid #d9d9d9;border-bottom:none;box-sizing:border-box;"></div>
<div class="t" style="left:74.54px;top:343.69px;font-size:11px;color:#000;transform:scaleX(1.060);transform-origin:0 0;">На<u>й</u>ти</div>
<div class="t" style="left:126.70px;top:344.69px;font-size:11px;color:#000;transform:scaleX(1.158);transform-origin:0 0;">Заменит<u>ь</u></div>
<div class="t" style="left:73.44px;top:372.19px;font-size:11px;color:#000;transform:scaleX(1.064);transform-origin:0 0;">Найт<u>и</u>:</div>
<div style="position:absolute;left:153px;top:367px;width:173px;height:20px;background:#fff;border:1px solid #a6a6a6;box-sizing:border-box;"></div>
<div style="position:absolute;left:308.5px;top:367px;width:17.5px;height:20px;background:#e3e3e3;border:2px solid #a6a6a6;border-left-width:1px;box-sizing:border-box;"></div>
<svg style="position:absolute;left:313.25px;top:374.5px;overflow:visible;" width="9" height="6" viewBox="0 0 9 6"><path d="M0.6 0.6L4.5 4.6L8.4 0.6" fill="none" stroke="#333" stroke-width="1.1"/></svg>
<div style="position:absolute;left:335px;top:367px;width:111px;height:20px;background:#fff;border:1px solid #111;box-sizing:border-box;"></div>
<div class="t" style="left:345.50px;top:371.89px;font-size:11px;color:#000;transform:scaleX(1.017);transform-origin:0 0;">Формат не задан</div>
<div style="position:absolute;left:456px;top:368px;width:89px;height:18px;background:#e1e1e1;border:2px solid #0078d7;box-sizing:border-box;"></div>
<div style="position:absolute;left:534px;top:370px;width:1px;height:14px;background:#aaa;"></div>
<svg style="position:absolute;left:537px;top:375.5px;overflow:visible;" width="6" height="4" viewBox="0 0 6 4"><path d="M0 0H5.5L2.75 3.5Z" fill="#000"/></svg>
<div class="t" style="left:475.50px;top:372.19px;font-size:11px;color:#000;transform:scaleX(1.065);transform-origin:0 0;">Форма<u>т</u>...</div>
<div class="t" style="left:73.43px;top:426.29px;font-size:11px;color:#000;transform:scaleX(1.069);transform-origin:0 0;">И<u>с</u>кать:</div>
<div class="t" style="left:73.44px;top:451.19px;font-size:11px;color:#000;transform:scaleX(1.062);transform-origin:0 0;">Прос<u>м</u>атривать:</div>
<div class="t" style="left:74.50px;top:476.19px;font-size:11px;color:#000;transform:scaleX(1.036);transform-origin:0 0;">О<u>б</u>ласть поиска:</div>
<div style="position:absolute;left:171px;top:420px;width:138px;height:22px;background:#fff;border:1px solid #a6a6a6;box-sizing:border-box;"></div>
<div style="position:absolute;left:291.5px;top:420px;width:17.5px;height:22px;background:#e3e3e3;border:2px solid #a6a6a6;border-left-width:1px;box-sizing:border-box;"></div>
<svg style="position:absolute;left:296.25px;top:428.5px;overflow:visible;" width="9" height="6" viewBox="0 0 9 6"><path d="M0.6 0.6L4.5 4.6L8.4 0.6" fill="none" stroke="#333" stroke-width="1.1"/></svg>
<div style="position:absolute;left:171px;top:445px;width:138px;height:22px;background:#fff;border:1px solid #a6a6a6;box-sizing:border-box;"></div>
<div style="position:absolute;left:291.5px;top:445px;width:17.5px;height:22px;background:#e3e3e3;border:2px solid #a6a6a6;border-left-width:1px;box-sizing:border-box;"></div>
<svg style="position:absolute;left:296.25px;top:453.5px;overflow:visible;" width="9" height="6" viewBox="0 0 9 6"><path d="M0.6 0.6L4.5 4.6L8.4 0.6" fill="none" stroke="#333" stroke-width="1.1"/></svg>
<div style="position:absolute;left:171px;top:470px;width:138px;height:22px;background:#fff;border:1px solid #a6a6a6;box-sizing:border-box;"></div>
<div style="position:absolute;left:291.5px;top:470px;width:17.5px;height:22px;background:#e3e3e3;border:2px solid #a6a6a6;border-left-width:1px;box-sizing:border-box;"></div>
<svg style="position:absolute;left:296.25px;top:478.5px;overflow:visible;" width="9" height="6" viewBox="0 0 9 6"><path d="M0.6 0.6L4.5 4.6L8.4 0.6" fill="none" stroke="#333" stroke-width="1.1"/></svg>
<div class="t" style="left:175.50px;top:425.69px;font-size:11px;color:#000;transform:scaleX(0.989);transform-origin:0 0;">на листе</div>
<div class="t" style="left:175.50px;top:450.69px;font-size:11px;color:#000;transform:scaleX(1.045);transform-origin:0 0;">по строкам</div>
<div class="t" style="left:175.50px;top:475.69px;font-size:11px;color:#000;transform:scaleX(0.969);transform-origin:0 0;">формулы</div>
<div style="position:absolute;left:318px;top:421px;width:13px;height:13px;background:#fff;border:1px solid #333;box-sizing:border-box;"></div>
<div style="position:absolute;left:318px;top:440px;width:13px;height:13px;background:#fff;border:1px solid #333;box-sizing:border-box;"></div>
<div class="t" style="left:335.00px;top:422.69px;font-size:11px;color:#000;transform:scaleX(1.049);transform-origin:0 0;"><u>У</u>читывать регистр</div>
<div class="t" style="left:333.92px;top:442.19px;font-size:11px;color:#000;transform:scaleX(1.079);transform-origin:0 0;">Ячейка ц<u>е</u>ликом</div>
<div style="position:absolute;left:448px;top:469px;width:97px;height:22px;background:#e1e1e1;border:1px solid #adadad;box-sizing:border-box;"></div>
<div class="t" style="left:456.50px;top:475.29px;font-size:11px;color:#000;transform:scaleX(1.033);transform-origin:0 0;"><u>П</u>араметры <span style="font-size:9.5px">&lt; &lt;</span></div>
<div style="position:absolute;left:294px;top:510px;width:74px;height:22px;background:#e1e1e1;border:1px solid #adadad;box-sizing:border-box;"></div>
<div class="t" style="left:304.50px;top:516.19px;font-size:11px;color:#000;transform:scaleX(1.010);transform-origin:0 0;"><u>Н</u>айти все</div>
<div style="position:absolute;left:378px;top:510px;width:83px;height:22px;background:#e1e1e1;border:1px solid #adadad;box-sizing:border-box;"></div>
<div class="t" style="left:384.95px;top:516.19px;font-size:11px;color:#000;transform:scaleX(1.047);transform-origin:0 0;">Найти д<u>а</u>лее</div>
<div style="position:absolute;left:480px;top:510px;width:74px;height:22px;background:#e1e1e1;border:1px solid #adadad;box-sizing:border-box;"></div>
<div class="t" style="left:494.50px;top:516.19px;font-size:11px;color:#000;transform:scaleX(1.060);transform-origin:0 0;">Закрыть</div>
<div style="position:absolute;left:582px;top:261px;width:665px;height:518px;background:#fff;border:1px solid #5a5a5a;box-sizing:border-box;box-shadow:0 3px 16px rgba(0,0,0,0.3);"></div>
<div style="position:absolute;left:583px;top:292px;width:663px;height:486px;background:#f0f0f0;"></div>
<div class="t" style="left:590.78px;top:271.67px;font-size:11.5px;color:#000;transform:scaleX(1.019);transform-origin:0 0;">Найти формат</div>
<div class="t" style="left:1175.50px;top:270.02px;font-size:12.5px;color:#000;transform:scaleX(0.829);transform-origin:0 0;">?</div>
<svg style="position:absolute;left:1217.5px;top:270.5px;overflow:visible;" width="11" height="11" viewBox="0 0 11 11"><path d="M0.6 0.6L10.4 10.4M10.4 0.6L0.6 10.4" stroke="#111" stroke-width="1.1"/></svg>
<div style="position:absolute;left:589px;top:320px;width:649px;height:419px;background:#fff;border:1px solid #d9d9d9;box-sizing:border-box;"></div>
<div style="position:absolute;left:591px;top:301px;width:50px;height:20px;background:#f0f0f0;border:1px solid #d9d9d9;border-bottom:none;border-left:none;box-sizing:border-box;"></div>
<div class="t" style="left:600.68px;top:306.69px;font-size:11px;color:#000;transform:scaleX(1.017);transform-origin:0 0;">Число</div>
<div style="position:absolute;left:741px;top:301px;width:56px;height:20px;background:#f0f0f0;border:1px solid #d9d9d9;border-bottom:none;box-sizing:border-box;"></div>
<div class="t" style="left:748.20px;top:306.69px;font-size:11px;color:#000;transform:scaleX(1.103);transform-origin:0 0;">Шрифт</div>
<div style="position:absolute;left:796px;top:301px;width:64px;height:20px;background:#f0f0f0;border:1px solid #d9d9d9;border-bottom:none;box-sizing:border-box;"></div>
<div class="t" style="left:805.02px;top:306.69px;font-size:11px;color:#000;transform:scaleX(1.083);transform-origin:0 0;">Граница</div>
<div style="position:absolute;left:859px;top:301px;width:62px;height:20px;background:#f0f0f0;border:1px solid #d9d9d9;border-bottom:none;box-sizing:border-box;"></div>
<div class="t" style="left:869.00px;top:306.69px;font-size:11px;color:#000;transform:scaleX(0.991);transform-origin:0 0;">Заливка</div>
<div style="position:absolute;left:920px;top:301px;width:56px;height:20px;background:#f0f0f0;border:1px solid #d9d9d9;border-bottom:none;box-sizing:border-box;"></div>
<div class="t" style="left:929.00px;top:306.69px;font-size:11px;color:#000;transform:scaleX(0.985);transform-origin:0 0;">Защита</div>
<div style="position:absolute;left:641px;top:299px;width:101px;height:22px;background:#fff;border:1px solid #d9d9d9;border-bottom:none;box-sizing:border-box;"></div>
<div class="t" style="left:651.14px;top:305.99px;font-size:11px;color:#000;transform:scaleX(1.057);transform-origin:0 0;">Выравнивание</div>
<div class="t" style="left:597.25px;top:332.19px;font-size:11px;color:#000;transform:scaleX(1.050);transform-origin:0 0;">Выравнивание</div>
<div style="position:absolute;left:682px;top:336px;width:406px;height:1px;background:#dcdcdc;"></div>
<div class="t" style="left:607.50px;top:351.99px;font-size:11px;color:#000;transform:scaleX(1.099);transform-origin:0 0;">по горизо<u>н</u>тали:</div>
<div style="position:absolute;left:607px;top:366px;width:166px;height:22px;background:#fff;border:1px solid #a6a6a6;box-sizing:border-box;"></div>
<div style="position:absolute;left:755.5px;top:366px;width:17.5px;height:22px;background:#e3e3e3;border:2px solid #a6a6a6;border-left-width:1px;box-sizing:border-box;"></div>
<svg style="position:absolute;left:760.25px;top:374.5px;overflow:visible;" width="9" height="6" viewBox="0 0 9 6"><path d="M0.6 0.6L4.5 4.6L8.4 0.6" fill="none" stroke="#333" stroke-width="1.1"/></svg>
<div class="t" style="left:782.30px;top:372.69px;font-size:11px;color:#6d6d6d;transform:scaleX(1.029);transform-origin:0 0;">отступ:</div>
<div style="position:absolute;left:782px;top:387px;width:59px;height:20px;background:#fff;border:1px solid #a0a0a0;box-sizing:border-box;"></div>
<div style="position:absolute;left:824px;top:388px;width:16px;height:9px;background:#e5e5e5;border:1px solid #c8c8c8;box-sizing:border-box;"></div>
<div style="position:absolute;left:824px;top:397px;width:16px;height:9px;background:#e5e5e5;border:1px solid #c8c8c8;box-sizing:border-box;"></div>
<svg style="position:absolute;left:828.5px;top:390.5px;overflow:visible;" width="7" height="4" viewBox="0 0 7 4"><path d="M0 3.5H7L3.5 0Z" fill="#000"/></svg>
<svg style="position:absolute;left:828.5px;top:400px;overflow:visible;" width="7" height="4" viewBox="0 0 7 4"><path d="M0 0H7L3.5 3.5Z" fill="#000"/></svg>
<div class="t" style="left:607.50px;top:392.89px;font-size:11px;color:#000;transform:scaleX(1.057);transform-origin:0 0;">по <u>в</u>ертикали:</div>
<div style="position:absolute;left:607px;top:407px;width:166px;height:22px;background:#fff;border:1px solid #a6a6a6;box-sizing:border-box;"></div>
<div style="position:absolute;left:755.5px;top:407px;width:17.5px;height:22px;background:#e3e3e3;border:2px solid #a6a6a6;border-left-width:1px;box-sizing:border-box;"></div>
<svg style="position:absolute;left:760.25px;top:415.5px;overflow:visible;" width="9" height="6" viewBox="0 0 9 6"><path d="M0.6 0.6L4.5 4.6L8.4 0.6" fill="none" stroke="#333" stroke-width="1.1"/></svg>
<div style="position:absolute;left:607px;top:434px;width:13px;height:13px;background:#fff;border:1px solid #c6c6c6;box-sizing:border-box;"></div>
<div style="position:absolute;left:610px;top:437px;width:7px;height:7px;background:#c6c6c6;"></div>
<div class="t" style="left:622.95px;top:435.69px;font-size:11px;color:#6d6d6d;transform:scaleX(1.049);transform-origin:0 0;">Распределять по ширине</div>
<div class="t" style="left:599.00px;top:458.19px;font-size:11px;color:#000;transform:scaleX(1.057);transform-origin:0 0;">Отображение</div>
<div style="position:absolute;left:679px;top:462px;width:409px;height:1px;background:#dcdcdc;"></div>
<div style="position:absolute;left:607px;top:477px;width:13px;height:13px;background:#fff;border:1px solid #333;box-sizing:border-box;"></div>
<div style="position:absolute;left:607px;top:496px;width:13px;height:13px;background:#fff;border:1px solid #333;box-sizing:border-box;"></div>
<div style="position:absolute;left:607px;top:516px;width:13px;height:13px;background:#fff;border:1px solid #333;box-sizing:border-box;"></div>
<svg style="position:absolute;left:609px;top:518px;overflow:visible;" width="10" height="9" viewBox="0 0 10 9"><path d="M0.8 4.5L3.8 7.5L9.2 0.8" fill="none" stroke="#222" stroke-width="1.2"/></svg>
<div class="t" style="left:624.70px;top:478.69px;font-size:11px;color:#000;transform:scaleX(1.028);transform-origin:0 0;">перено<u>с</u>ить текст</div>
<div class="t" style="left:624.70px;top:497.69px;font-size:11px;color:#000;transform:scaleX(1.072);transform-origin:0 0;"><u>а</u>втоподбор ширины</div>
<div class="t" style="left:624.70px;top:517.19px;font-size:11px;color:#000;transform:scaleX(1.060);transform-origin:0 0;">о<u>б</u>ъединение ячеек</div>
<div style="position:absolute;left:622px;top:514px;width:111px;height:16px;border:1px dotted #333;box-sizing:border-box;"></div>
<div style="position:absolute;left:1097px;top:336px;width:133px;height:216px;border:1px solid #dcdcdc;box-sizing:border-box;"></div>
<div style="position:absolute;left:1101px;top:330px;width:71px;height:12px;background:#fff;"></div>
<div class="t" style="left:1103.50px;top:331.69px;font-size:11px;color:#000;transform:scaleX(1.066);transform-origin:0 0;">Ориентация</div>
<div style="position:absolute;left:1106px;top:350px;width:24px;height:173px;border:1px solid #7a7a7a;box-sizing:border-box;background:#fff;"></div>
<div style="position:absolute;left:1133px;top:350px;width:89px;height:173px;border:1px solid #7a7a7a;box-sizing:border-box;background:#fff;"></div>
<div class="t" style="left:1114.63px;top:405.69px;font-size:11px;color:#000;">Т</div>
<div class="t" style="left:1114.94px;top:418.89px;font-size:11px;color:#000;">е</div>
<div class="t" style="left:1115.59px;top:432.09px;font-size:11px;color:#000;">к</div>
<div class="t" style="left:1115.25px;top:445.29px;font-size:11px;color:#000;">с</div>
<div class="t" style="left:1115.48px;top:458.49px;font-size:11px;color:#000;">т</div>
<svg style="position:absolute;left:1133px;top:350px;overflow:visible;" width="89" height="173" viewBox="0 0 89 173"><path d="M6.1 5.3L10.1 9.3L6.1 13.3L2.1 9.3Z" fill="#000"/><path d="M60.4 28.2L64.4 32.2L60.4 36.2L56.4 32.2Z" fill="#000"/><path d="M83.3 82.6L87.3 86.6L83.3 90.6L79.3 86.6Z" fill="#000"/><path d="M60.4 136.3L64.4 140.3L60.4 144.3L56.4 140.3Z" fill="#000"/><path d="M6.1 159.2L10.1 163.2L6.1 167.2L2.1 163.2Z" fill="#000"/><rect x="25.0" y="10.5" width="2" height="2" fill="#000"/><rect x="43.7" y="17.7" width="2" height="2" fill="#000"/><rect x="71.9" y="45.8" width="2" height="2" fill="#000"/><rect x="78.8" y="64.9" width="2" height="2" fill="#000"/><rect x="78.8" y="104.9" width="2" height="2" fill="#000"/><rect x="71.9" y="124.2" width="2" height="2" fill="#000"/><rect x="43.7" y="151.8" width="2" height="2" fill="#000"/><rect x="25.0" y="159.0" width="2" height="2" fill="#000"/></svg>
<div style="position:absolute;left:1106px;top:527px;width:59px;height:19px;background:#fff;border:1px solid #a0a0a0;box-sizing:border-box;"></div>
<div style="position:absolute;left:1148px;top:528px;width:16px;height:9px;background:#e5e5e5;border:1px solid #c8c8c8;box-sizing:border-box;"></div>
<div style="position:absolute;left:1148px;top:536px;width:16px;height:9px;background:#e5e5e5;border:1px solid #c8c8c8;box-sizing:border-box;"></div>
<svg style="position:absolute;left:1152.5px;top:531px;overflow:visible;" width="7" height="4" viewBox="0 0 7 4"><path d="M0 3.5H7L3.5 0Z" fill="#000"/></svg>
<svg style="position:absolute;left:1152.5px;top:539.5px;overflow:visible;" width="7" height="4" viewBox="0 0 7 4"><path d="M0 0H7L3.5 3.5Z" fill="#000"/></svg>
<div class="t" style="left:1168.00px;top:531.69px;font-size:11px;color:#000;transform:scaleX(1.038);transform-origin:0 0;"><u>г</u>радусов</div>
<div style="position:absolute;left:1156px;top:707px;width:74px;height:22px;background:#e1e1e1;border:1px solid #adadad;box-sizing:border-box;"></div>
<div class="t" style="left:1166.50px;top:713.19px;font-size:11px;color:#000;transform:scaleX(1.052);transform-origin:0 0;">Очистит<u>ь</u></div>
<div style="position:absolute;left:589px;top:748px;width:214px;height:22px;background:#e1e1e1;border:1px solid #adadad;box-sizing:border-box;"></div>
<div class="t" style="left:596.14px;top:754.19px;font-size:11px;color:#000;transform:scaleX(1.061);transform-origin:0 0;">Использовать формат этой яче<u>й</u>ки...</div>
<div style="position:absolute;left:1081px;top:748px;width:74px;height:22px;background:#e1e1e1;border:2px solid #0078d7;box-sizing:border-box;"></div>
<div class="t" style="left:1110.50px;top:754.19px;font-size:11px;color:#000;transform:scaleX(0.906);transform-origin:0 0;">OK</div>
<div style="position:absolute;left:1165px;top:748px;width:74px;height:22px;background:#e1e1e1;border:1px solid #adadad;box-sizing:border-box;"></div>
<div class="t" style="left:1181.50px;top:754.19px;font-size:11px;color:#000;transform:scaleX(1.012);transform-origin:0 0;">Отмена</div>
<svg style="position:absolute;left:0;top:0" width="1259" height="798" viewBox="0 0 1259 798"><defs><filter id="sh" x="-20%" y="-20%" width="140%" height="140%"><feDropShadow dx="1.6" dy="2.2" stdDeviation="2.2" flood-color="#000" flood-opacity="0.5"/></filter></defs><g filter="url(#sh)"><rect x="891.0" y="33.0" width="76" height="80" fill="none" stroke="#ff8000" stroke-width="4"/><rect x="449.0" y="349.0" width="102.0" height="50.0" fill="none" stroke="#ff8000" stroke-width="3"/><rect x="440.5" y="464.5" width="113" height="32" fill="none" stroke="#ff8000" stroke-width="3"/><rect x="597.5" y="511.5" width="166" height="24" fill="none" stroke="#ff8000" stroke-width="3"/><rect x="1070.75" y="737.75" width="91.5" height="42.5" fill="none" stroke="#ff8000" stroke-width="3.5"/><path d="M895.30 114.80L356.95 304.20" stroke="#ff7e3a" stroke-width="3" stroke-linecap="round"/><path d="M336.20 311.50L363.05 309.47L356.95 304.20L358.40 296.27Z" fill="#ff7e3a"/><path d="M495.40 460.40L495.40 432.00" stroke="#ff7e3a" stroke-width="3" stroke-linecap="round"/><path d="M495.40 410.00L488.40 436.00L495.40 432.00L502.40 436.00Z" fill="#ff7e3a"/><path d="M534.50 338.50L629.06 321.25" stroke="#ff7e3a" stroke-width="3" stroke-linecap="round"/><path d="M650.70 317.30L623.87 315.08L629.06 321.25L626.38 328.85Z" fill="#ff7e3a"/><path d="M770.20 550.40L1041.36 713.75" stroke="#ff7e3a" stroke-width="3" stroke-linecap="round"/><path d="M1060.20 725.10L1041.54 705.69L1041.36 713.75L1034.32 717.68Z" fill="#ff7e3a"/><circle cx="950.5" cy="141.5" r="11.6" fill="#fff" stroke="rgba(0,0,0,0.22)" stroke-width="0.8"/><circle cx="950.5" cy="141.5" r="9.1" fill="#ff8000"/><circle cx="385.3" cy="482.4" r="11.6" fill="#fff" stroke="rgba(0,0,0,0.22)" stroke-width="0.8"/><circle cx="385.3" cy="482.4" r="9.1" fill="#ff8000"/><circle cx="413" cy="347.5" r="11.6" fill="#fff" stroke="rgba(0,0,0,0.22)" stroke-width="0.8"/><circle cx="413" cy="347.5" r="9.1" fill="#ff8000"/><circle cx="797.3" cy="524.6" r="11.6" fill="#fff" stroke="rgba(0,0,0,0.22)" stroke-width="0.8"/><circle cx="797.3" cy="524.6" r="9.1" fill="#ff8000"/><circle cx="1100.5" cy="713.5" r="11.6" fill="#fff" stroke="rgba(0,0,0,0.22)" stroke-width="0.8"/><circle cx="1100.5" cy="713.5" r="9.1" fill="#ff8000"/></g><text x="950.5" y="146.0" text-anchor="middle" font-family="Liberation Sans" font-size="12.5" fill="#fff" stroke="#fff" stroke-width="0.6">1</text><text x="385.3" y="486.9" text-anchor="middle" font-family="Liberation Sans" font-size="12.5" fill="#fff" stroke="#fff" stroke-width="0.6">2</text><text x="413" y="352.0" text-anchor="middle" font-family="Liberation Sans" font-size="12.5" fill="#fff" stroke="#fff" stroke-width="0.6">3</text><text x="797.3" y="529.1" text-anchor="middle" font-family="Liberation Sans" font-size="12.5" fill="#fff" stroke="#fff" stroke-width="0.6">4</text><text x="1100.5" y="718.0" text-anchor="middle" font-family="Liberation Sans" font-size="12.5" fill="#fff" stroke="#fff" stroke-width="0.6">5</text></svg>
</body></html>
